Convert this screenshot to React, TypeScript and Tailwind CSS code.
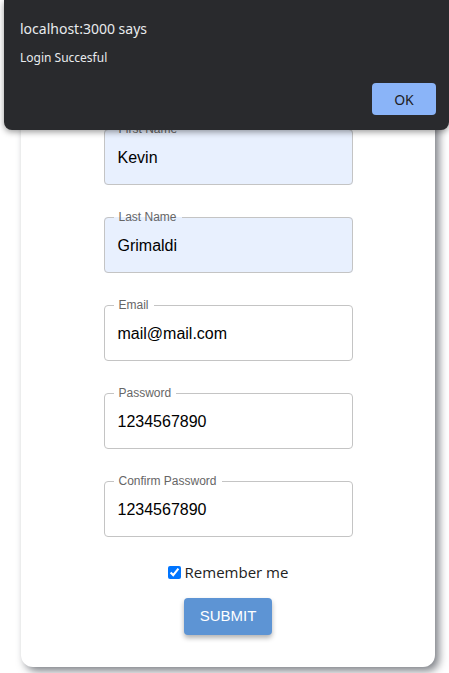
import React from 'react'

interface Field {
  label: string
  value: string
  autofill?: boolean
}

const fields: Field[] = [
  { label: 'First Name', value: 'Kevin', autofill: true },
  { label: 'Last Name', value: 'Grimaldi', autofill: true },
  { label: 'Email', value: 'mail@mail.com' },
  { label: 'Password', value: '1234567890' },
  { label: 'Confirm Password', value: '1234567890' },
]

const OutlinedField: React.FC<{ field: Field }> = ({ field }) => (
  <fieldset
    className={`w-[249px] m-0 p-0 rounded-[4px] border border-[#c4c4c4] ${
      field.autofill ? 'bg-[#e8f0fe] border-[#b4bcc8]' : 'bg-white'
    }`}
  >
    <legend className="ml-[9px] px-[5px] text-[12px] leading-4 text-[#666]">{field.label}</legend>
    <div className="h-[47px] pl-[13px] pb-[6px] flex items-center text-[16px] text-black">
      {field.value}
    </div>
  </fieldset>
)

export default function App() {
  return (
    <div className="relative min-h-[673px] bg-white overflow-hidden font-['Liberation_Sans',Arial,sans-serif]">
      <div className="pt-[100px] pb-[6px]">
        <div className="ml-[21px] w-[414px] bg-white rounded-[12px] shadow-[4px_4px_8px_rgba(40,45,55,0.6)] pt-[21px] pb-[32px] flex flex-col items-center">
          <div className="flex flex-col gap-[24px]">
            {fields.map((f) => (
              <OutlinedField key={f.label} field={f} />
            ))}
          </div>
          <label className="mt-[23px] h-[24px] flex items-center gap-[4px] text-[15px] text-[#222] font-['Open_Sans',sans-serif]">
            <input type="checkbox" defaultChecked className="w-[13px] h-[13px] m-0 accent-[#0075ff]" />
            Remember me
          </label>
          <button className="mt-[14px] w-[88px] h-[37px] rounded-[4px] bg-[#5d94d4] text-white text-[15px] shadow-[0_3px_5px_rgba(0,0,0,0.3)]">
            SUBMIT
          </button>
        </div>
      </div>

      <div className="absolute top-0 left-[4px] w-[445px] h-[130px] bg-[#292a2d] rounded-b-[8px] shadow-[0_2px_6px_rgba(0,0,0,0.4)] font-['Noto_Sans',sans-serif] text-[#e8eaed]">
        <div className="pl-[16px] pt-[18px] text-[14px] leading-[22px]">localhost:3000 says</div>
        <div className="pl-[16px] pt-[9px] text-[12px] leading-[18px]">Login Succesful</div>
        <div className="flex justify-end pr-[13px] pt-[16px]">
          <button className="w-[64px] h-[32px] rounded-[4px] bg-[#8ab4f8] text-[#202124] text-[14px]">OK</button>
        </div>
      </div>
    </div>
  )
}
